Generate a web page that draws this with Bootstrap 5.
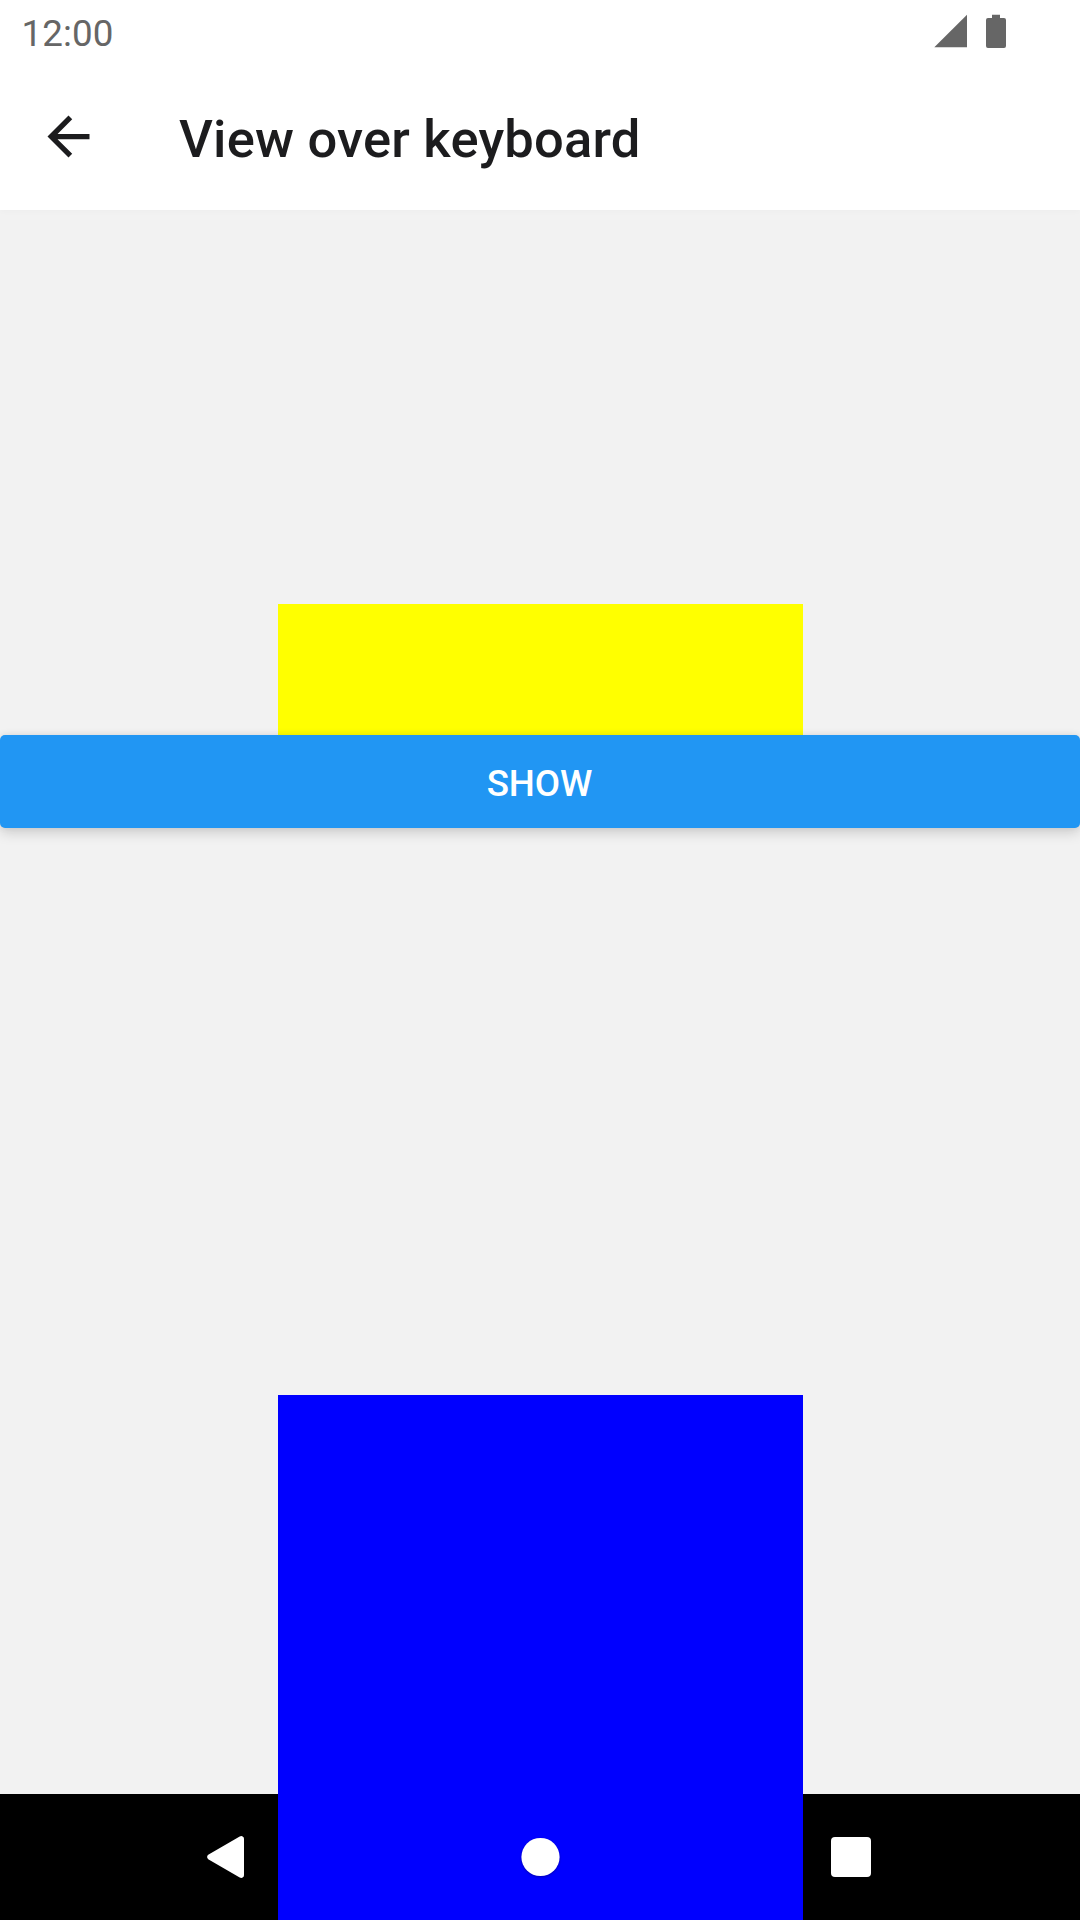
<!DOCTYPE html>
<html lang="en">
<head>
<meta charset="utf-8">
<meta name="viewport" content="width=device-width, initial-scale=1">
<title>View over keyboard</title>
<link href="https://cdn.jsdelivr.net/npm/bootstrap@5.3.0/dist/css/bootstrap.min.css" rel="stylesheet">
<style>
  body { font-family: Roboto, sans-serif; background: #f2f2f2; }
  .screen { height: 1920px; overflow: hidden; }
  .top-area { box-shadow: 0 2px 6px rgba(0,0,0,.02); }
  .status-bar { height: 63px; padding: 4px 74px 0 21.5px; color: #666; font-size: 36.75px; line-height: 62px; letter-spacing: .1px; }
  .status-icons { width: 72px; height: 36px; margin-top: -4px; }
  .app-bar { height: 147px; padding-left: 37px; color: #1c1c1e; }
  .back-btn { width: 63px; height: 63px; }
  .app-title { font-size: 52.5px; font-weight: 500; line-height: 62px; letter-spacing: .21px; margin: 4px 0 0 79px; }
  .content { padding-top: 394px; }
  .yellow-view { width: 525px; height: 131px; background: #ff0; }
  .show-btn { height: 93px; border: 0; border-radius: 5px; background: #2196f3; color: #fff; font-size: 36.75px; font-weight: 500; line-height: 43px; letter-spacing: -.1px; padding: 3px 1px 0 0;
    box-shadow: 0 5px 13px rgba(0,0,0,.15), 0 0 7px rgba(0,0,0,.07); }
  .show-btn:hover { background: #2196f3; color: #fff; }
  .nav-area { height: 126px; background: #000; padding: 0 209px 0 207px; }
  .nav-area svg { z-index: 2; }
  .blue-view { width: 525px; height: 525px; left: 278px; bottom: 0; background: #00f; z-index: 1; }
  .home-dot { margin-left: 4px; filter: drop-shadow(0 1px 1px rgba(0,0,0,.3)); }
</style>
<script src="https://cdn.jsdelivr.net/npm/bootstrap@5.3.0/dist/js/bootstrap.bundle.min.js"></script>
</head>
<body>
<div class="screen position-relative d-flex flex-column">
  <header class="top-area bg-white">
    <div class="status-bar d-flex justify-content-between align-items-center">
      <span>12:00</span>
      <svg class="status-icons" viewBox="0 0 72 36" fill="#666">
        <path d="M0.3 33.3 33 .7V33.3Z"/>
        <path d="M58 .7h8V4h4a2 2 0 0 1 2 2v26a2 2 0 0 1-2 2H54a2 2 0 0 1-2-2V6a2 2 0 0 1 2-2h4Z"/>
      </svg>
    </div>
    <div class="app-bar d-flex align-items-center">
      <svg class="back-btn" viewBox="0 0 24 24" fill="currentColor" role="button" aria-label="Back">
        <path d="M20 11H7.83l5.59-5.59L12 4l-8 8 8 8 1.41-1.41L7.83 13H20z"/>
      </svg>
      <h1 class="app-title">View over keyboard</h1>
    </div>
  </header>
  <main class="content flex-grow-1">
    <div class="yellow-view mx-auto"></div>
    <button type="button" class="btn show-btn w-100 d-block position-relative">SHOW</button>
  </main>
  <div class="blue-view position-absolute"></div>
  <footer class="nav-area d-flex justify-content-between align-items-center">
    <svg class="position-relative" width="37" height="42" viewBox="0 0 37 42" fill="#fff"><path d="M1.2 18.8 32.7.5Q34.5-.4 36 .7Q37 1.3 37 3V39Q37 40.7 36 41.3Q34.5 42.4 32.7 41.5L1.2 23.2Q-1 21 1.2 18.8Z"/></svg>
    <svg class="home-dot position-relative" width="40" height="40" viewBox="0 0 40 40" fill="#fff"><circle cx="20.5" cy="20" r="19.1"/></svg>
    <svg class="position-relative" width="40" height="40" viewBox="0 0 40 40" fill="#fff"><rect width="40" height="40" rx="4"/></svg>
  </footer>
</div>
</body>
</html>
